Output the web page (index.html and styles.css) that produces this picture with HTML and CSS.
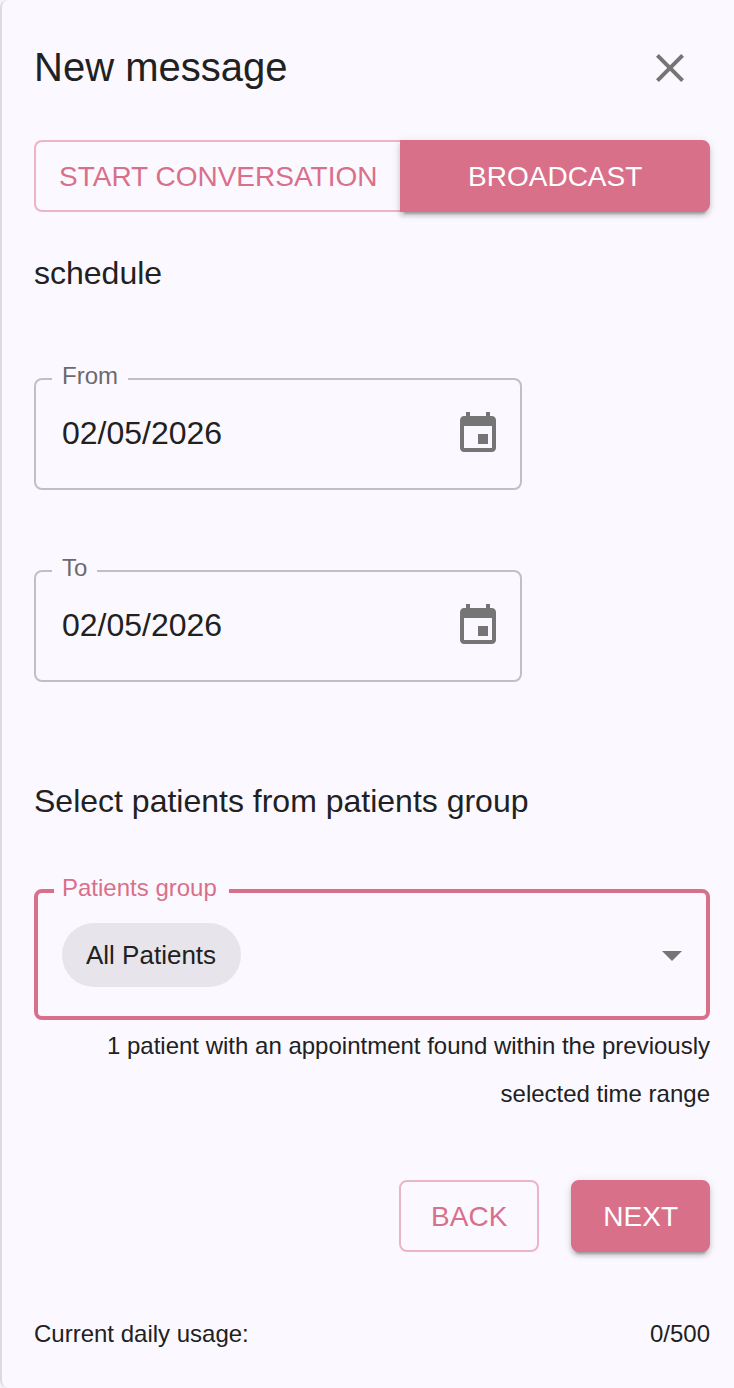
FILE: index.html
```html
<!DOCTYPE html>
<html lang="en">
<head>
    <meta charset="UTF-8">
    <meta name="viewport" content="width=device-width, initial-scale=1.0">
    <title>New message</title>
    <link rel="stylesheet" href="styles.css">
</head>
<body>
    <form class="panel">
        <header class="panel-header">
            <h1>New message</h1>
            <button type="button" class="icon-button close" aria-label="Close">
                <svg class="icon" viewBox="0 0 24 24"><path d="M19 6.41 17.59 5 12 10.59 6.41 5 5 6.41 10.59 12 5 17.59 6.41 19 12 13.41 17.59 19 19 17.59 13.41 12z"/></svg>
            </button>
        </header>

        <div class="toggle">
            <button type="button" class="btn btn-outlined">START CONVERSATION</button>
            <button type="button" class="btn btn-contained">BROADCAST</button>
        </div>

        <h2>schedule</h2>

        <fieldset class="field date-field">
            <legend><label for="from">From</label></legend>
            <div class="field-row">
                <input type="text" id="from" name="from" value="02/05/2026">
                <button type="button" class="icon-button" aria-label="Choose start date">
                    <svg class="icon" viewBox="0 0 24 24"><path d="M17 12h-5v5h5v-5zM16 1v2H8V1H6v2H5c-1.11 0-1.99.9-1.99 2L3 19c0 1.1.89 2 2 2h14c1.1 0 2-.9 2-2V5c0-1.1-.9-2-2-2h-1V1h-2zm3 18H5V8h14v11z"/></svg>
                </button>
            </div>
        </fieldset>

        <fieldset class="field date-field">
            <legend><label for="to">To</label></legend>
            <div class="field-row">
                <input type="text" id="to" name="to" value="02/05/2026">
                <button type="button" class="icon-button" aria-label="Choose end date">
                    <svg class="icon" viewBox="0 0 24 24"><path d="M17 12h-5v5h5v-5zM16 1v2H8V1H6v2H5c-1.11 0-1.99.9-1.99 2L3 19c0 1.1.89 2 2 2h14c1.1 0 2-.9 2-2V5c0-1.1-.9-2-2-2h-1V1h-2zm3 18H5V8h14v11z"/></svg>
                </button>
            </div>
        </fieldset>

        <h2 class="group-title">Select patients from patients group</h2>

        <fieldset class="field group-field">
            <legend><label for="group">Patients group</label></legend>
            <div class="group-row">
                <select id="group" name="group" class="chip">
                    <option>All Patients</option>
                </select>
                <svg class="icon" viewBox="0 0 24 24"><path d="m7 10 5 5 5-5z"/></svg>
            </div>
        </fieldset>
        <p class="hint">1 patient with an appointment found within the previously selected time range</p>

        <div class="actions">
            <button type="button" class="btn btn-outlined">BACK</button>
            <button type="submit" class="btn btn-contained">NEXT</button>
        </div>

        <footer class="usage">
            <span>Current daily usage:</span>
            <span>0/500</span>
        </footer>
    </form>
</body>
</html>
```

FILE: styles.css
```css
* {
    box-sizing: border-box;
}
body {
    margin: 0;
    background-color: #f5f3f8;
    color: #212121;
    font-family: Helvetica, "Liberation Sans", Arial, sans-serif;
}
.panel {
    min-height: 100vh;
    padding: 28px 24px 30px 32px;
    background-color: #fbf9ff;
    border-left: 2px solid #dddbe1;
    border-radius: 8px 0 0 8px;
}
h1, h2, p {
    margin: 0;
    font-weight: 400;
}
h1 {
    font-size: 40px;
    line-height: 78px;
}
h2 {
    padding-bottom: 2px;
    font-size: 32px;
    line-height: 46px;
}
button, input, select {
    font-family: inherit;
    color: inherit;
}
button {
    cursor: pointer;
}
.panel-header {
    display: flex;
    justify-content: space-between;
    height: 80px;
    margin-bottom: 32px;
}
.icon {
    display: block;
    flex: none;
    width: 48px;
    height: 48px;
    fill: #757575;
}
.icon-button {
    padding: 0;
    border: none;
    background: none;
}
.close {
    padding: 16px;
}

/* buttons */
.btn {
    height: 72px;
    padding: 2px 30px 0;
    border: 2px solid transparent;
    border-radius: 8px;
    font-size: 28px;
}
.btn-outlined {
    background: none;
    border-color: #ecb5c5;
    color: #d9708a;
}
.btn-contained {
    background-color: #d9708a;
    border-color: #d9708a;
    color: #fff;
    box-shadow: 0 6px 2px -4px rgba(0, 0, 0, 0.2), 0 4px 4px rgba(0, 0, 0, 0.14), 0 2px 10px rgba(0, 0, 0, 0.12);
}
.toggle {
    display: flex;
    margin-bottom: 38px;
}
.toggle .btn {
    padding: 2px 23px 0;
}
.toggle .btn-outlined {
    border-right: none;
    border-radius: 8px 0 0 8px;
}
.toggle .btn-contained {
    flex: 1;
    border-radius: 0 8px 8px 0;
}

/* outlined fields, the label sits in the notch of the border */
.field {
    min-width: 0;
    margin: 0;
    border: 2px solid #c1bfc5;
    border-radius: 8px;
}
.field legend {
    padding: 0 10px 6px;
    color: #6b6a6e;
    font-size: 24px;
    line-height: 24px;
}
.field label {
    display: block;
}
.date-field {
    max-width: 488px;
    margin-top: 66px;
    padding: 0 18px 14px 16px;
}
.field-row {
    display: flex;
    align-items: center;
    height: 80px;
    padding-left: 10px;
}
.field-row input {
    flex: 1;
    min-width: 0;
    padding: 0 0 2px;
    border: none;
    outline: none;
    background: none;
    font-size: 32px;
}
.group-title {
    margin: 96px 0 50px;
}
.group-field {
    padding: 17px 10px 29px 16px;
    border: 4px solid #d9708a;
}
.group-field legend {
    padding: 0 12px 6px 8px;
    color: #d9708a;
}
.group-row {
    display: flex;
    align-items: center;
    justify-content: space-between;
    padding-left: 8px;
}
.chip {
    appearance: none;
    height: 64px;
    padding: 0 24px;
    border: none;
    border-radius: 32px;
    background-color: #e7e4eb;
    font-size: 26px;
}
.hint {
    margin: 2px 0 62px;
    font-size: 24px;
    line-height: 48px;
    text-align: right;
}
.actions {
    display: flex;
    justify-content: flex-end;
    gap: 32px;
    margin-bottom: 58px;
}
.usage {
    display: flex;
    justify-content: space-between;
    font-size: 24px;
    line-height: 48px;
}
```
